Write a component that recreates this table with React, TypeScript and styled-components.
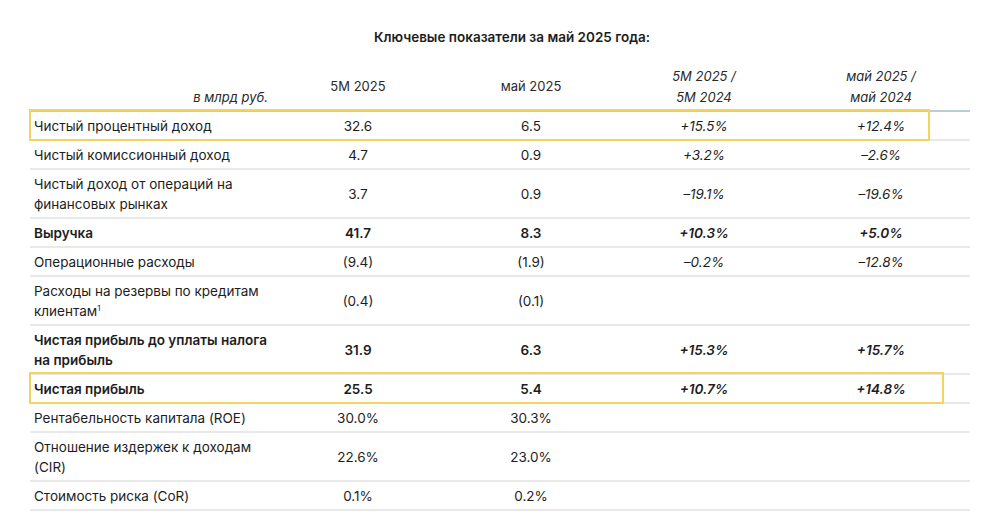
import styled, { createGlobalStyle, css } from "styled-components";

const GlobalStyle = createGlobalStyle`
  body {
    margin: 0;
    background: #fff;
    font-family: Inter, "Noto Sans", sans-serif;
    color: #1d1d1d;
  }
`;

const Page = styled.div`
  width: 1000px;
  height: 530px;
  padding-top: 28px;
  box-sizing: border-box;
  overflow: hidden;
`;

const Title = styled.h2`
  margin: 0 0 17px;
  padding-left: 24px;
  text-align: center;
  font-size: 13.5px;
  font-weight: 600;
  line-height: 18px;
`;

const Table = styled.div`
  margin: 0 30px;
  width: 940px;
`;

const cols = css`
  display: grid;
  grid-template-columns: 240px 176px 170px 176px 1fr;
`;

const HeadRow = styled.div`
  ${cols};
  height: 47px;
  border-bottom: 2px solid #b9ced3;
`;

const HeadCell = styled.div<{ $italic?: boolean; $bottom?: boolean }>`
  display: flex;
  align-items: ${(p) => (p.$bottom ? "flex-end" : "center")};
  justify-content: center;
  text-align: center;
  font-size: 13px;
  line-height: 21px;
  font-style: ${(p) => (p.$italic ? "italic" : "normal")};
  color: #2a2a2a;
`;

const UnitCell = styled(HeadCell)`
  justify-content: flex-end;
  padding-right: 2px;
  padding-bottom: 2px;
`;

const Row = styled.div<{ $bold?: boolean; $box?: number }>`
  ${cols};
  position: relative;
  border-bottom: 2px solid #e9e9e9;
  font-weight: ${(p) => (p.$bold ? 600 : 400)};
  ${(p) =>
    p.$box &&
    css`
      &::after {
        content: "";
        position: absolute;
        left: -1px;
        top: -3px;
        bottom: -2px;
        width: ${p.$box}px;
        border: 2.5px solid #f4d35e;
        box-sizing: border-box;
        pointer-events: none;
      }
    `}
`;

const Label = styled.div`
  padding: 4px 0 3px 4px;
  font-size: 13.5px;
  line-height: 20px;
  display: flex;
  align-items: center;

  sup {
    font-size: 8px;
    line-height: 0;
    position: relative;
    top: -5px;
    vertical-align: baseline;
  }
`;

const Value = styled.div<{ $italic?: boolean }>`
  display: flex;
  align-items: center;
  justify-content: center;
  font-size: 13.5px;
  line-height: 20px;
  font-style: ${(p) => (p.$italic ? "italic" : "normal")};
`;

type Line = {
  label: React.ReactNode;
  vals: string[];
  bold?: boolean;
  box?: number;
};

const rows: Line[] = [
  { label: "Чистый процентный доход", vals: ["32.6", "6.5", "+15.5%", "+12.4%"], box: 901 },
  { label: "Чистый комиссионный доход", vals: ["4.7", "0.9", "+3.2%", "–2.6%"] },
  {
    label: (
      <>
        Чистый доход от операций на
        <br />
        финансовых рынках
      </>
    ),
    vals: ["3.7", "0.9", "–19.1%", "–19.6%"],
  },
  { label: "Выручка", vals: ["41.7", "8.3", "+10.3%", "+5.0%"], bold: true },
  { label: "Операционные расходы", vals: ["(9.4)", "(1.9)", "–0.2%", "–12.8%"] },
  {
    label: (
      <>
        Расходы на резервы по кредитам
        <br />
        клиентам<sup>1</sup>
      </>
    ),
    vals: ["(0.4)", "(0.1)", "", ""],
  },
  {
    label: (
      <>
        Чистая прибыль до уплаты налога
        <br />
        на прибыль
      </>
    ),
    vals: ["31.9", "6.3", "+15.3%", "+15.7%"],
    bold: true,
  },
  { label: "Чистая прибыль", vals: ["25.5", "5.4", "+10.7%", "+14.8%"], bold: true, box: 915 },
  { label: "Рентабельность капитала (ROE)", vals: ["30.0%", "30.3%", "", ""] },
  {
    label: (
      <>
        Отношение издержек к доходам
        <br />
        (CIR)
      </>
    ),
    vals: ["22.6%", "23.0%", "", ""],
  },
  { label: "Стоимость риска (CoR)", vals: ["0.1%", "0.2%", "", ""] },
];

export default function App() {
  return (
    <>
      <GlobalStyle />
      <Page>
        <Title>Ключевые показатели за май 2025 года:</Title>
        <Table>
          <HeadRow>
            <UnitCell $italic $bottom>
              в млрд руб.
            </UnitCell>
            <HeadCell>5M 2025</HeadCell>
            <HeadCell>май 2025</HeadCell>
            <HeadCell $italic>
              5M 2025 /
              <br />
              5M 2024
            </HeadCell>
            <HeadCell $italic>
              май 2025 /
              <br />
              май 2024
            </HeadCell>
          </HeadRow>
          {rows.map((r, i) => (
            <Row key={i} $bold={r.bold} $box={r.box}>
              <Label>
                <span>{r.label}</span>
              </Label>
              {r.vals.map((v, j) => (
                <Value key={j} $italic={j > 1}>
                  {v}
                </Value>
              ))}
            </Row>
          ))}
        </Table>
      </Page>
    </>
  );
}
